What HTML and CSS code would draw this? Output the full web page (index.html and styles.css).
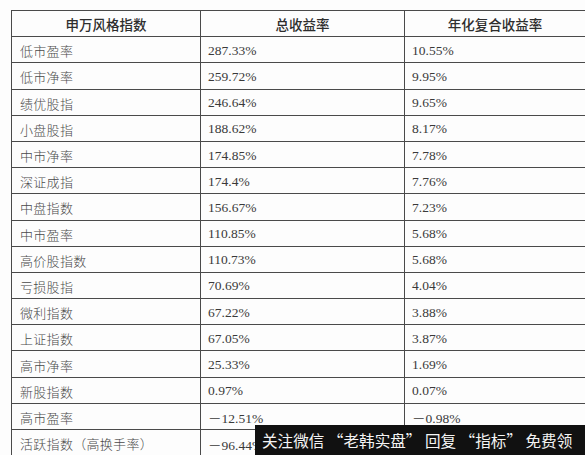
FILE: index.html
```html
<!DOCTYPE html>
<html lang="zh-CN">
<head>
<meta charset="utf-8">
<title>申万风格指数</title>
<link rel="stylesheet" href="styles.css">
</head>
<body>
<div class="page">
  <table class="data">
    <colgroup>
      <col class="c1"><col class="c2"><col class="c3">
    </colgroup>
    <thead>
      <tr><th>申万风格指数</th><th>总收益率</th><th>年化复合收益率</th></tr>
    </thead>
    <tbody>
      <tr><td class="name">低市盈率</td><td>287.33%</td><td>10.55%</td></tr>
      <tr><td class="name">低市净率</td><td>259.72%</td><td>9.95%</td></tr>
      <tr><td class="name">绩优股指</td><td>246.64%</td><td>9.65%</td></tr>
      <tr><td class="name">小盘股指</td><td>188.62%</td><td>8.17%</td></tr>
      <tr><td class="name">中市净率</td><td>174.85%</td><td>7.78%</td></tr>
      <tr><td class="name">深证成指</td><td>174.4%</td><td>7.76%</td></tr>
      <tr><td class="name">中盘指数</td><td>156.67%</td><td>7.23%</td></tr>
      <tr><td class="name">中市盈率</td><td>110.85%</td><td>5.68%</td></tr>
      <tr><td class="name">高价股指数</td><td>110.73%</td><td>5.68%</td></tr>
      <tr><td class="name">亏损股指</td><td>70.69%</td><td>4.04%</td></tr>
      <tr><td class="name">微利指数</td><td>67.22%</td><td>3.88%</td></tr>
      <tr><td class="name">上证指数</td><td>67.05%</td><td>3.87%</td></tr>
      <tr><td class="name">高市净率</td><td>25.33%</td><td>1.69%</td></tr>
      <tr><td class="name">新股指数</td><td>0.97%</td><td>0.07%</td></tr>
      <tr><td class="name">高市盈率</td><td><span class="minus">－</span>12.51%</td><td><span class="minus">－</span>0.98%</td></tr>
      <tr><td class="name">活跃指数（高换手率）</td><td><span class="minus">－</span>96.44%</td><td><span class="minus">－</span>2.75%</td></tr>
    </tbody>
  </table>
  <div class="watermark">关注微信 “老韩实盘” 回复 “指标” 免费领</div>
</div>
</body>
</html>
```

FILE: styles.css
```css
html, body {
  margin: 0;
  padding: 0;
  background: #fdfdfd;
}

.page {
  position: relative;
  width: 585px;
  height: 455px;
  overflow: hidden;
  padding: 10px 0 0 11px;
  box-sizing: border-box;
}

.data {
  border-collapse: collapse;
  table-layout: fixed;
  width: 574px;
  font-family: "Liberation Serif", "Noto Sans CJK SC", serif;
  font-size: 13.5px;
  color: #3a3a3a;
}

.c1 { width: 189px; }
.c2 { width: 204px; }
.c3 { width: 181px; }

.data th,
.data td {
  border: 1px solid #4a4a4a;
  padding: 2px 0 0 7px;
  text-align: left;
  white-space: nowrap;
  overflow: hidden;
}

.data tr {
  height: 26.2px;
}

.data th {
  font-family: "Noto Sans CJK SC", sans-serif;
  font-weight: 500;
  font-size: 13.5px;
  text-align: center;
  padding: 0;
  color: #2e2e2e;
}

.data td.name {
  font-family: "Noto Sans CJK SC", sans-serif;
  font-weight: 300;
  font-size: 13px;
  color: #4a4a4a;
  padding-left: 8px;
  letter-spacing: 0.3px;
}

.minus {
  font-family: "Noto Sans CJK SC", sans-serif;
  font-weight: 300;
}

.watermark {
  position: absolute;
  left: 255px;
  top: 425px;
  width: 330px;
  height: 30px;
  background: #111;
  color: #f4f4f4;
  font-family: "Noto Sans CJK SC", sans-serif;
  font-size: 15.6px;
  line-height: 30px;
  padding-left: 7px;
  white-space: nowrap;
  box-sizing: border-box;
}
```
